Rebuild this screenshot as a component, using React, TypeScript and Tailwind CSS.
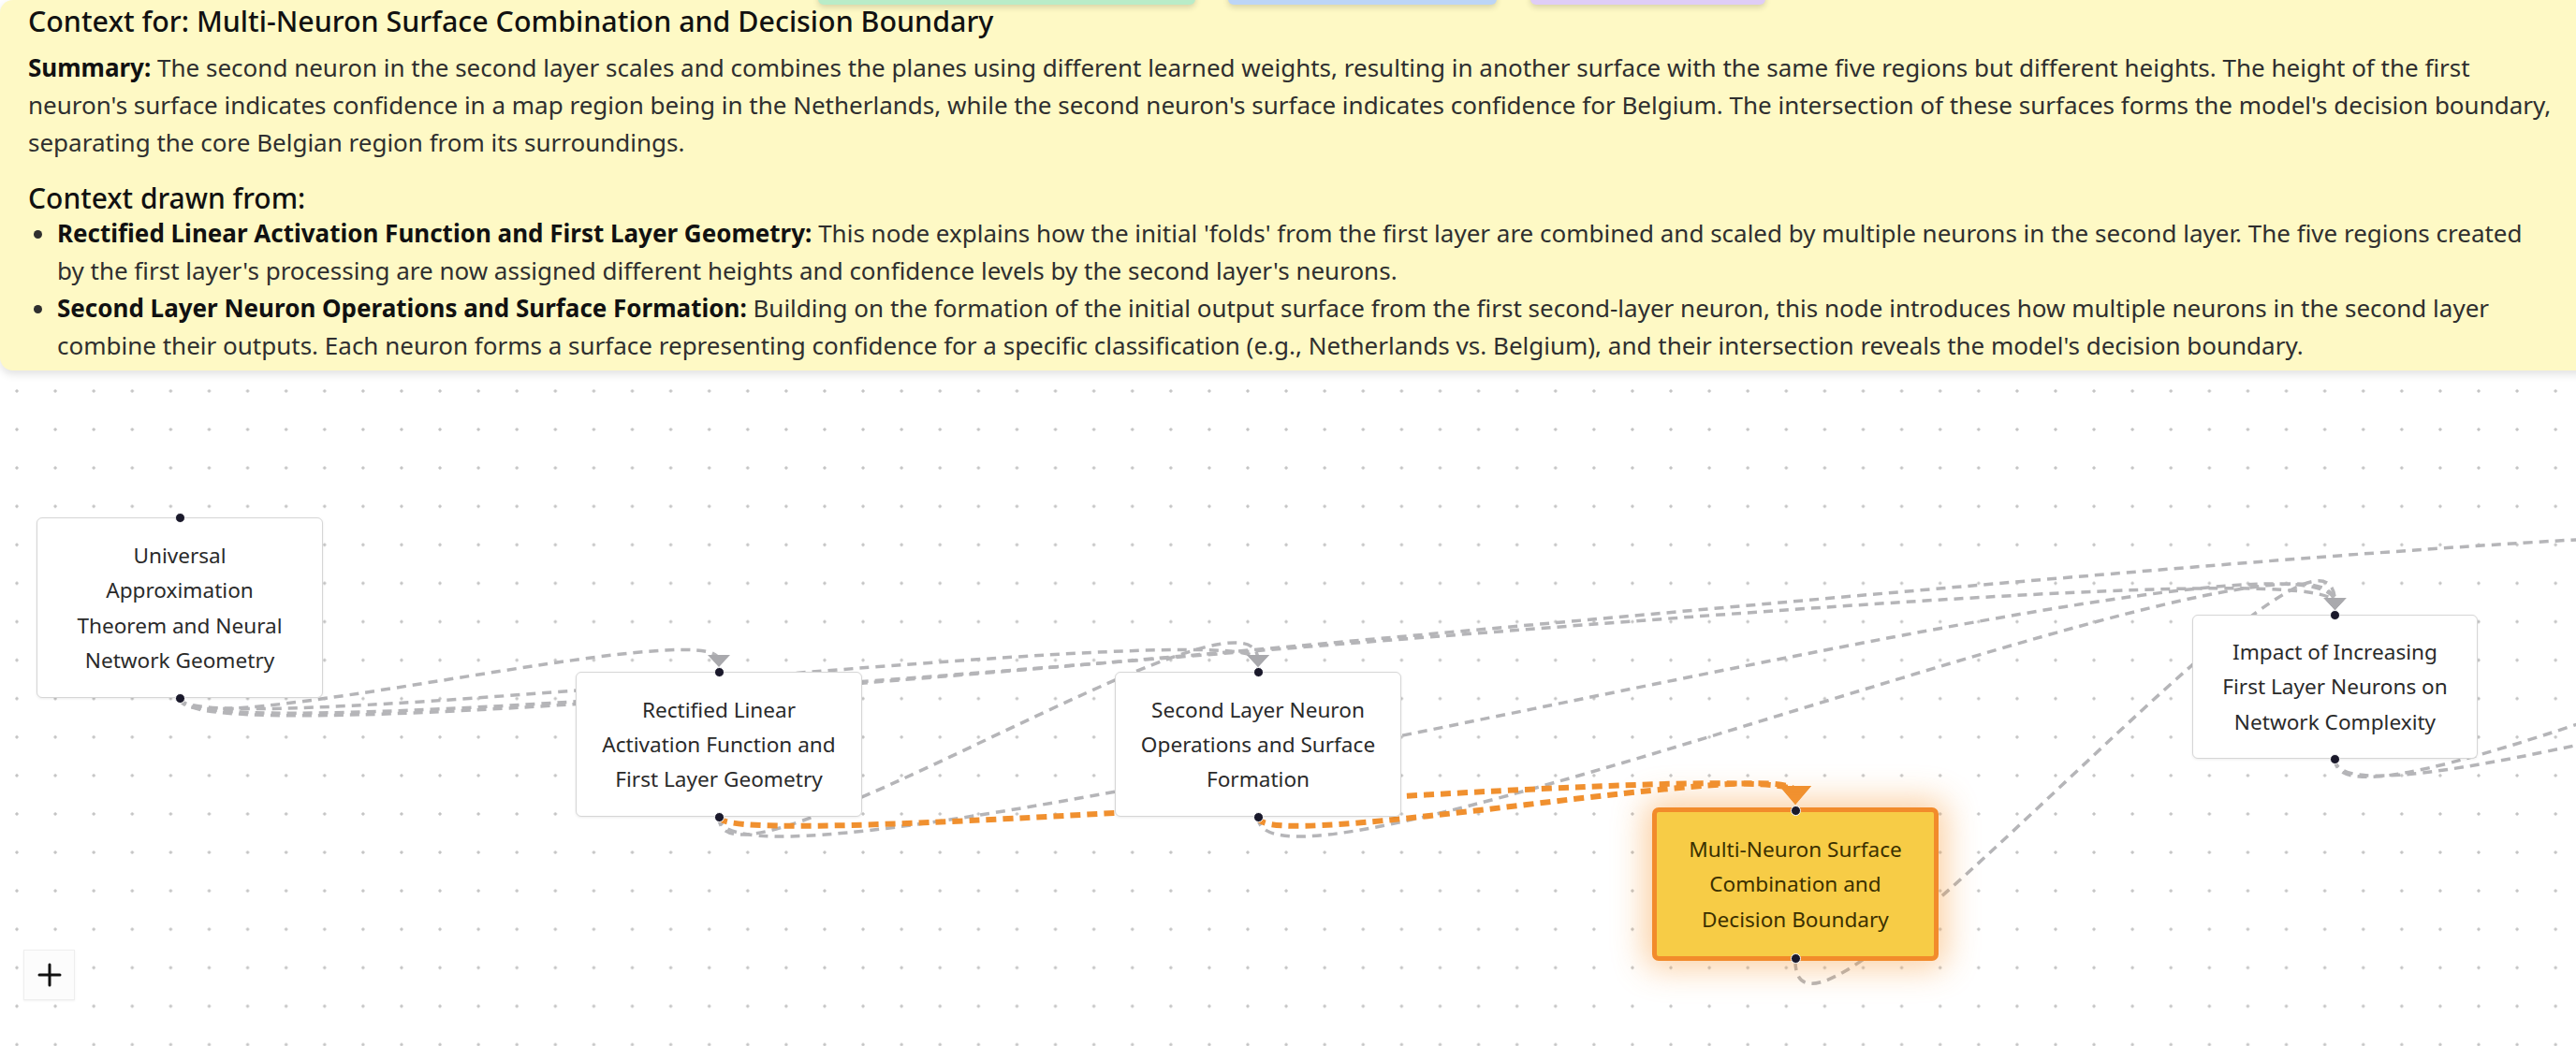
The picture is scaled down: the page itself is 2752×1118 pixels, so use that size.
import React from 'react';

type FlowNode = {
  id: string;
  x: number;
  y: number;
  w: number;
  h: number;
  lines: string[];
  selected?: boolean;
};

const nodes: FlowNode[] = [
  { id: 'uat', x: 39, y: 553, w: 306, h: 193, lines: ['Universal', 'Approximation', 'Theorem and Neural', 'Network Geometry'] },
  { id: 'relu', x: 615, y: 718, w: 306, h: 155, lines: ['Rectified Linear', 'Activation Function and', 'First Layer Geometry'] },
  { id: 'second', x: 1191, y: 718, w: 306, h: 155, lines: ['Second Layer Neuron', 'Operations and Surface', 'Formation'] },
  { id: 'impact', x: 2342, y: 657, w: 305, h: 154, lines: ['Impact of Increasing', 'First Layer Neurons on', 'Network Complexity'] },
  { id: 'multi', x: 1765, y: 863, w: 306, h: 164, lines: ['Multi-Neuron Surface', 'Combination and', 'Decision Boundary'], selected: true },
];

const byId = (id: string) => nodes.find((n) => n.id === id)!;
const bottomOf = (id: string): [number, number] => {
  const n = byId(id);
  return [n.x + n.w / 2, n.y + n.h];
};
const topOf = (id: string): [number, number] => {
  const n = byId(id);
  return [n.x + n.w / 2, n.y];
};

// bezier like react-flow's default edge, in screen pixels
const K = 8.27;
function edgePath([sx, sy]: [number, number], [tx, ty]: [number, number]) {
  const d = ty - sy;
  const off = d >= 0 ? d * 0.5 : K * Math.sqrt(-d);
  return `M${sx},${sy} C${sx},${sy + off} ${tx},${ty - off} ${tx},${ty}`;
}

type Edge = { from: [number, number]; to: [number, number]; hot?: boolean; arrow?: boolean };

const edges: Edge[] = [
  { from: bottomOf('uat'), to: topOf('relu'), arrow: true },
  { from: bottomOf('uat'), to: topOf('second'), arrow: true },
  { from: bottomOf('uat'), to: topOf('impact'), arrow: true },
  { from: bottomOf('uat'), to: [3100, 600] },
  { from: bottomOf('relu'), to: topOf('second'), arrow: true },
  { from: bottomOf('relu'), to: topOf('impact'), arrow: true },
  { from: bottomOf('second'), to: topOf('impact'), arrow: true },
  { from: bottomOf('multi'), to: topOf('impact'), arrow: true },
  { from: bottomOf('impact'), to: [3300, 650] },
  { from: bottomOf('impact'), to: [3500, 680] },
  { from: bottomOf('relu'), to: topOf('multi'), hot: true, arrow: true },
  { from: bottomOf('second'), to: topOf('multi'), hot: true, arrow: true },
];

function Edges() {
  return (
    <svg className="absolute left-0 top-0" width={2752} height={1118}>
      {edges.map((e, i) => (
        <path
          key={i}
          d={edgePath(e.from, [e.to[0], e.to[1] - (e.hot ? 16 : 12)])}
          fill="none"
          stroke={e.hot ? '#f0902f' : '#b5b5b8'}
          strokeWidth={e.hot ? 6 : 3.5}
          strokeDasharray={e.hot ? '11 7' : '10 7'}
        />
      ))}
      {edges
        .filter((e) => e.arrow)
        .map((e, i) => {
          const [tx, ty] = e.to;
          const pts = e.hot
            ? `${tx - 17},${ty - 23} ${tx + 17},${ty - 23} ${tx},${ty - 3}`
            : `${tx - 12},${ty - 18} ${tx + 12},${ty - 18} ${tx},${ty - 5}`;
          return <polygon key={i} points={pts} fill={e.hot ? '#f0902f' : '#a9a9ad'} />;
        })}
    </svg>
  );
}

function Handle({ x, y }: { x: number; y: number }) {
  return <div className="absolute w-[11px] h-[11px] rounded-full bg-[#1a192b] border border-white" style={{ left: x - 5.5, top: y - 5.5 }} />;
}

function NodeBox({ n }: { n: FlowNode }) {
  const cx = n.x + n.w / 2;
  return (
    <>
      <div
        className={
          n.selected
            ? 'absolute flex flex-col items-center justify-center rounded-[7px] border-[5px] border-[#f28b2b] bg-[#f7cc46] text-[#3b3000] shadow-[0_0_34px_8px_rgba(247,150,50,0.45)]'
            : 'absolute flex flex-col items-center justify-center rounded-[6px] border-[1.5px] border-[#d6d6d6] bg-white text-[#2a2a2a] shadow-[0_1px_3px_rgba(0,0,0,0.08)]'
        }
        style={{ left: n.x, top: n.y, width: n.w, height: n.h }}
      >
        {n.lines.map((l) => (
          <div key={l} className="text-[22.6px] leading-[37.3px] text-center whitespace-nowrap">
            {l}
          </div>
        ))}
      </div>
      <Handle x={cx} y={n.selected ? n.y + 3 : n.y} />
      <Handle x={cx} y={n.selected ? n.y + n.h - 3 : n.y + n.h} />
    </>
  );
}

function ContextPanel() {
  return (
    <div className="absolute left-0 top-0 w-[2770px] rounded-[14px] bg-[#fef9c5] shadow-[0_4px_10px_rgba(0,0,0,0.12)] pl-[30px] pr-[48px] pt-[3px] pb-[7px] text-[#2f2f2f]">
      <h2 className="text-[30.4px] leading-[40px] font-medium text-[#111]">
        Context for: Multi-Neuron Surface Combination and Decision Boundary
      </h2>
      <p className="mt-[9px] text-[26px] leading-[40px] whitespace-nowrap">
        <span className="font-bold text-[#111]">Summary:</span> The second neuron in the second layer scales and combines the planes using different learned weights, resulting in another surface with the same five regions but different heights. The height of the first
        <br />
        neuron's surface indicates confidence in a map region being in the Netherlands, while the second neuron's surface indicates confidence for Belgium. The intersection of these surfaces forms the model's decision boundary,
        <br />
        separating the core Belgian region from its surroundings.
      </p>
      <h3 className="mt-[23px] text-[30px] leading-[34px] font-medium text-[#111]">Context drawn from:</h3>
      <ul className="list-disc pl-[31px] text-[26px] leading-[40px]">
        <li>
          <span className="font-bold text-[#111]">Rectified Linear Activation Function and First Layer Geometry:</span> This node explains how the initial 'folds' from the first layer are combined and scaled by multiple neurons in the second layer. The five regions created by the first layer's processing are now assigned different heights and confidence levels by the second layer's neurons.
        </li>
        <li>
          <span className="font-bold text-[#111]">Second Layer Neuron Operations and Surface Formation:</span> Building on the formation of the initial output surface from the first second-layer neuron, this node introduces how multiple neurons in the second layer combine their outputs. Each neuron forms a surface representing confidence for a specific classification (e.g., Netherlands vs. Belgium), and their intersection reveals the model's decision boundary.
        </li>
      </ul>
    </div>
  );
}

export default function App() {
  return (
    <div className="relative w-[2752px] h-[1118px] overflow-hidden bg-white font-['Noto_Sans',sans-serif] bg-[radial-gradient(circle,#c3c3c3_1.4px,transparent_1.8px)] bg-[size:41.1px_41.1px] bg-[position:-2.55px_-13.55px]">
      <Edges />
      {nodes.map((n) => (
        <NodeBox key={n.id} n={n} />
      ))}

      <button className="absolute left-[25px] top-[1015px] w-[55px] h-[54px] flex items-center justify-center bg-[#fcfcfc] border border-[#eeeeee] shadow-[0_1px_2px_rgba(0,0,0,0.06)]">
        <svg width="26" height="26" viewBox="0 0 26 26">
          <path d="M13 2 V24 M2 13 H24" stroke="#111" strokeWidth="3" strokeLinecap="round" />
        </svg>
      </button>

      <ContextPanel />

      {/* toolbar buttons peeking out above the panel */}
      <div className="absolute left-[874px] top-[-40px] w-[403px] h-[45px] rounded-b-md bg-[#b9ecc8] shadow-[0_3px_6px_rgba(0,0,0,0.15)]" />
      <div className="absolute left-[1312px] top-[-40px] w-[287px] h-[45px] rounded-b-md bg-[#bcd5f6] shadow-[0_3px_6px_rgba(0,0,0,0.15)]" />
      <div className="absolute left-[1635px] top-[-40px] w-[251px] h-[45px] rounded-b-md bg-[#dfcdf6] shadow-[0_3px_6px_rgba(0,0,0,0.15)]" />
    </div>
  );
}
